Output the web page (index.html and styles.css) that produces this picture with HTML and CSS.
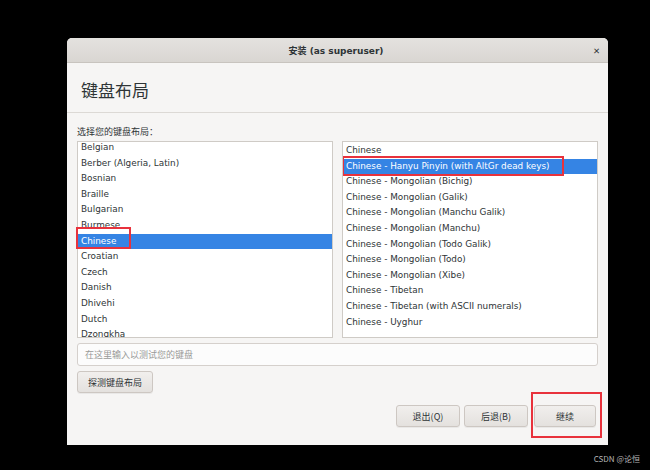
FILE: index.html
```html
<!DOCTYPE html>
<html>
<head>
<meta charset="utf-8">
<link rel="stylesheet" href="styles.css">
</head>
<body>
<div class="window">
  <div class="titlebar">
    <span class="title">安装 (as superuser)</span>
    <span class="close">✕</span>
  </div>
  <div class="header">键盘布局</div>
  <div class="content">
    <div class="label">选择您的键盘布局：</div>
    <div class="lists">
      <div class="list-wrap">
        <div class="list">
          <div class="inner scrolled">
            <div class="row">Belgian</div>
            <div class="row">Berber (Algeria, Latin)</div>
            <div class="row">Bosnian</div>
            <div class="row">Braille</div>
            <div class="row">Bulgarian</div>
            <div class="row">Burmese</div>
            <div class="row sel">Chinese</div>
            <div class="row">Croatian</div>
            <div class="row">Czech</div>
            <div class="row">Danish</div>
            <div class="row">Dhivehi</div>
            <div class="row">Dutch</div>
            <div class="row">Dzongkha</div>
          </div>
        </div>
        <span class="mark mark-left"></span>
      </div>
      <div class="list-wrap">
        <div class="list">
          <div class="inner top">
            <div class="row">Chinese</div>
            <div class="row sel"><span class="marked">Chinese - Hanyu Pinyin (with AltGr dead keys)</span></div>
            <div class="row">Chinese - Mongolian (Bichig)</div>
            <div class="row">Chinese - Mongolian (Galik)</div>
            <div class="row">Chinese - Mongolian (Manchu Galik)</div>
            <div class="row">Chinese - Mongolian (Manchu)</div>
            <div class="row">Chinese - Mongolian (Todo Galik)</div>
            <div class="row">Chinese - Mongolian (Todo)</div>
            <div class="row">Chinese - Mongolian (Xibe)</div>
            <div class="row">Chinese - Tibetan</div>
            <div class="row">Chinese - Tibetan (with ASCII numerals)</div>
            <div class="row">Chinese - Uyghur</div>
          </div>
        </div>
      </div>
    </div>
    <div class="entry">在这里输入以测试您的键盘</div>
    <div class="detect-row"><div class="btn detect">探测键盘布局</div></div>
    <div class="actions">
      <div class="btn act quit">退出(Q)</div>
      <div class="btn act back">后退(B)</div>
      <div class="btn act cont">继续</div>
    </div>
  </div>
</div>
<div class="watermark">CSDN @论恒</div>
</body>
</html>
```
FILE: styles.css
```css
html, body {
  margin: 0;
  padding: 0;
  background: #000;
  width: 650px;
  height: 470px;
  overflow: hidden;
  font-family: "DejaVu Sans", "Noto Sans CJK SC", sans-serif;
}
.window {
  margin: 38px 0 0 67px;
  width: 541px;
  height: 407px;
  background: #f6f5f4;
  border-radius: 5px 5px 0 0;
  display: flex;
  flex-direction: column;
  position: relative;
}
.titlebar {
  height: 25px;
  background: linear-gradient(#e4e2df, #d9d6d2);
  border-radius: 5px 5px 0 0;
  border-bottom: 1px solid #c8c4bf;
  box-sizing: border-box;
  display: flex;
  align-items: center;
  justify-content: center;
  position: relative;
}
.title {
  font-size: 9px;
  font-weight: bold;
  color: #2e3436;
  margin-right: 3px;
}
.close {
  position: absolute;
  right: 8px;
  top: 8px;
  font-size: 8.5px;
  font-weight: bold;
  color: #2e3436;
}
.header {
  height: 50px;
  box-sizing: border-box;
  border-bottom: 1px solid #dcd9d5;
  padding: 15px 0 0 14px;
  font-family: "Noto Sans CJK SC", sans-serif;
  font-size: 17px;
  color: #2e3436;
  line-height: 24px;
}
.content {
  padding: 12px 10px 0 10px;
  display: flex;
  flex-direction: column;
  flex: 1;
}
.label {
  font-family: "Noto Sans CJK SC", sans-serif;
  font-size: 9px;
  color: #2e3436;
  line-height: 14px;
  height: 16px;
}
.lists {
  display: flex;
  gap: 9px;
  height: 197px;
}
.list-wrap {
  flex: 1;
  position: relative;
  display: flex;
}
.list {
  flex: 1;
  background: #fff;
  border: 1px solid #cfcbc6;
  overflow: hidden;
}
.inner.scrolled {
  margin-top: -2px;
}
.inner.top {
  padding-top: 1px;
}
.row {
  height: 15.6px;
  line-height: 15.6px;
  font-size: 8.85px;
  color: #2e3436;
  padding-left: 3px;
  white-space: nowrap;
}
.row.sel {
  background: #3584e4;
  color: #fff;
}
.mark-left {
  position: absolute;
  left: -1px;
  top: 86px;
  width: 51px;
  height: 18px;
  border: 2px solid #e8323c;
}
.marked {
  outline: 2px solid #e8323c;
  padding: 3px 12px 3px 2px;
  margin-left: -2px;
}
.entry {
  margin-top: 5px;
  height: 23px;
  box-sizing: border-box;
  border: 1px solid #d5d0cc;
  border-radius: 3px;
  background: #fcfcfc;
  font-family: "Noto Sans CJK SC", sans-serif;
  font-size: 9px;
  color: #999a98;
  line-height: 21px;
  padding-left: 7px;
}
.detect-row {
  margin-top: 5px;
  display: flex;
}
.btn {
  height: 22px;
  box-sizing: border-box;
  border: 1px solid #cdc7c2;
  border-radius: 3px;
  background: linear-gradient(#f1efed, #e4e1de);
  font-family: "Noto Sans CJK SC", sans-serif;
  font-size: 9px;
  color: #2e3436;
  display: flex;
  align-items: center;
  justify-content: center;
  box-shadow: 0 1px 0 rgba(0,0,0,0.05);
}
.detect {
  width: 76px;
}
.actions {
  margin-top: 12px;
  display: flex;
  justify-content: flex-end;
  gap: 4px;
  padding-right: 2px;
}
.quit, .back {
  width: 64px;
}
.cont {
  width: 62px;
  margin-left: 2px;
  position: relative;
}
.cont::after {
  content: "";
  position: absolute;
  left: -4px;
  right: -7px;
  top: -14px;
  bottom: -12px;
  border: 2px solid #e8323c;
}
.watermark {
  position: absolute;
  right: 10px;
  top: 453px;
  font-family: "Noto Sans CJK SC", sans-serif;
  font-size: 8px;
  color: #b5b5b5;
}
```
